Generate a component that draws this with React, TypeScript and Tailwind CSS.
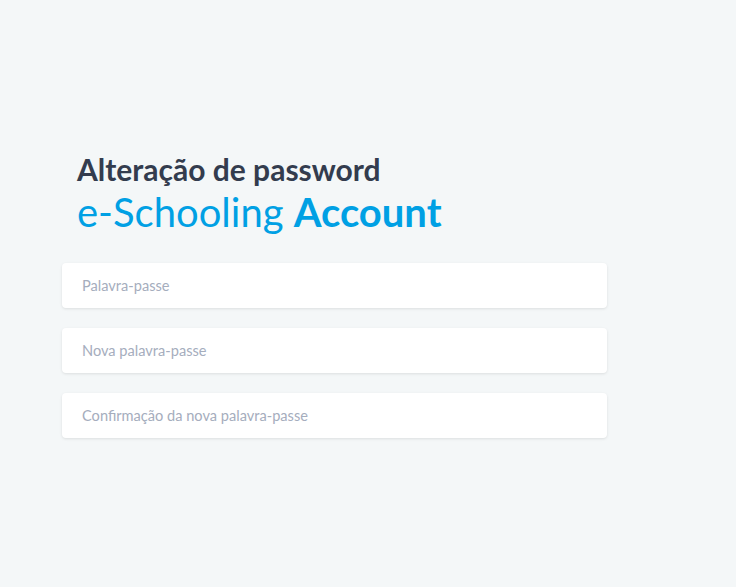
export default function App() {
  const fields = [
    "Palavra-passe",
    "Nova palavra-passe",
    "Confirmação da nova palavra-passe",
  ];

  return (
    <div
      className="min-h-[587px] w-full bg-[#f4f7f8] pl-[62px] pt-[150px]"
      style={{ fontFamily: "Lato, 'Open Sans', sans-serif" }}
    >
      <div className="w-[545px]">
        <div className="pl-[15px]">
          <h1 className="text-[30px] font-bold leading-[38px] text-[#333c4e]">
            Alteração de password
          </h1>
          <h2 className="text-[40px] leading-[48px] text-[#00a0e4]">
            e-Schooling <span className="font-bold">Account</span>
          </h2>
        </div>
        <form className="mt-[27px] flex flex-col gap-5">
          {fields.map((f) => (
            <input
              key={f}
              type="password"
              placeholder={f}
              className="h-[45px] w-full rounded-[4px] bg-white px-5 text-[14.6px] text-[#333c4e] shadow-[0_1px_3px_rgba(0,0,0,0.1)] outline-none placeholder:text-[#a5adbd]"
            />
          ))}
        </form>
      </div>
    </div>
  );
}
